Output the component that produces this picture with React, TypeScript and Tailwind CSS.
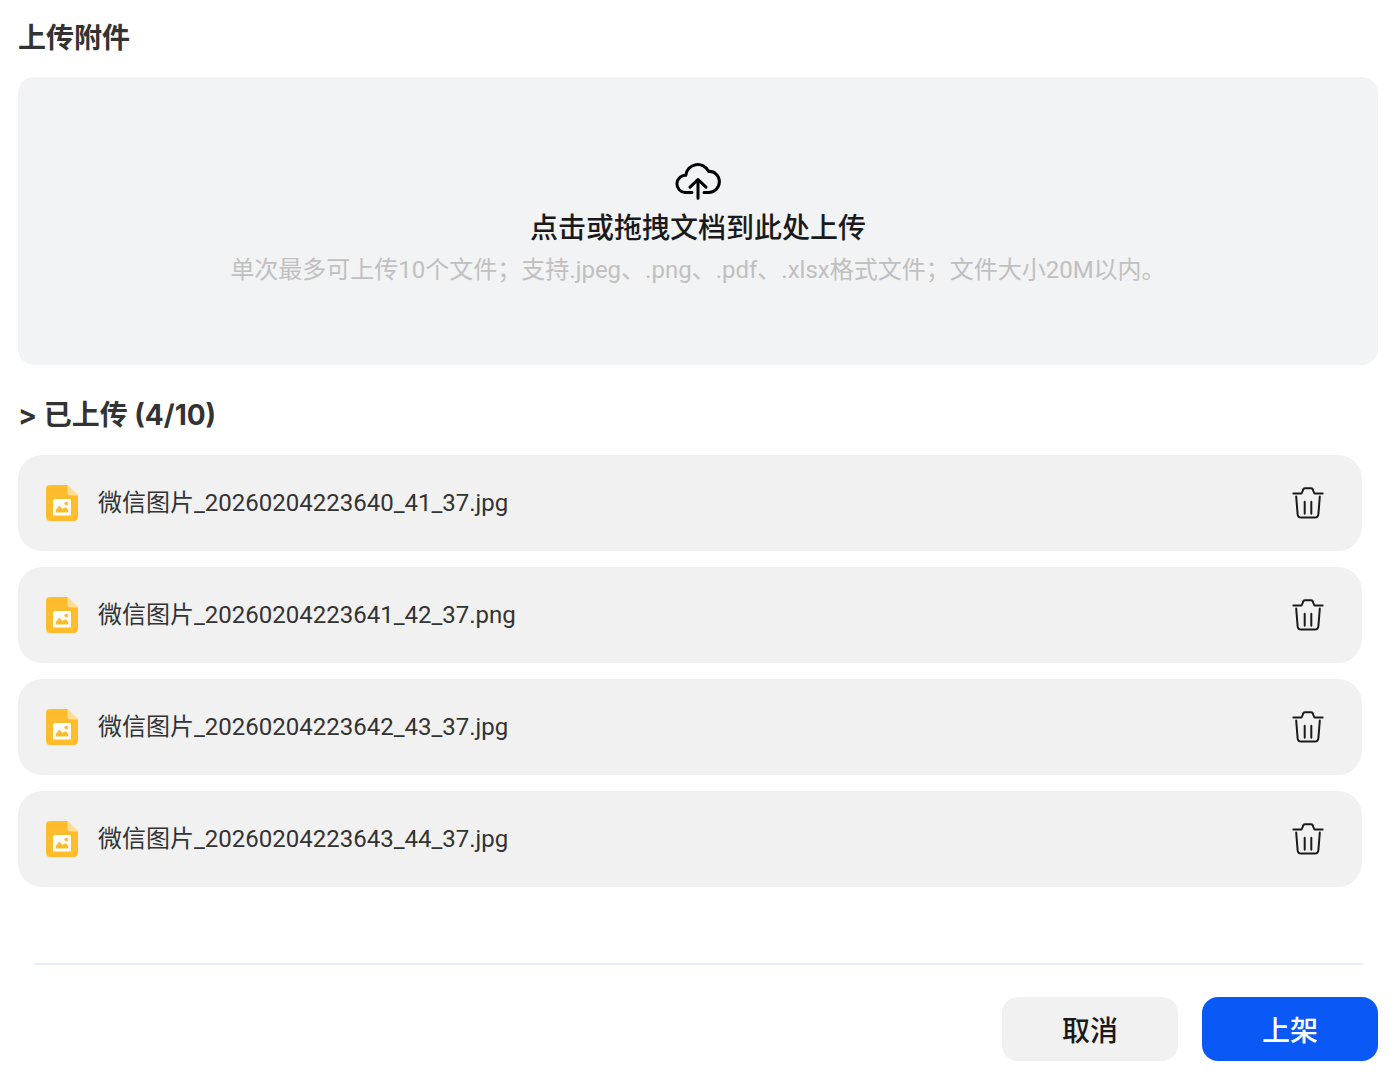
import { useState } from 'react';

const initialFiles = [
  { id: 1, name: '微信图片_20260204223640_41_37.jpg' },
  { id: 2, name: '微信图片_20260204223641_42_37.png' },
  { id: 3, name: '微信图片_20260204223642_43_37.jpg' },
  { id: 4, name: '微信图片_20260204223643_44_37.jpg' },
];

function CloudUploadIcon() {
  return (
    <svg className="w-[46px] h-[38px]" viewBox="0 0 46 38" fill="none" stroke="#000" strokeWidth="3" strokeLinecap="round" strokeLinejoin="round" aria-hidden="true">
      <path d="M17 30.5H10.2a8.6 8.6 0 0 1 .6-17.2A12 12 0 0 1 33.6 9.4C39.6 9 44.4 14 44.4 19.6c0 6-4.8 10.9-10.4 10.9h-5"/>
      <path d="M23 36.3V17.5M15 25.2l8-7.7 8 7.7"/>
    </svg>
  );
}

function ImageFileIcon() {
  return (
    <svg className="w-8 h-9 shrink-0" viewBox="0 0 32 36" aria-hidden="true">
      <path d="M4 0h17.5L32 10.5V32a4 4 0 0 1-4 4H4a4 4 0 0 1-4-4V4a4 4 0 0 1 4-4z" fill="#ffbd2e"/>
      <path d="M21.5 0 32 10.5h-7.5a3 3 0 0 1-3-3z" fill="#ffdd93"/>
      <rect x="7" y="14" width="18" height="16.5" rx="1.5" fill="#fff"/>
      <path d="M9.8 24.7l3.6-4.3 3.4 3.5 2.7-2 2.8 2.8v2.3a.6.6 0 0 1-.6.6H10.4a.6.6 0 0 1-.6-.6z" fill="#ffbd2e"/>
      <circle cx="20.3" cy="18.5" r="1.9" fill="#ffbd2e"/>
    </svg>
  );
}

function TrashIcon() {
  return (
    <svg className="w-8 h-8" viewBox="0 0 32 32" fill="none" stroke="#1a1a1a" strokeWidth="2" strokeLinecap="round" strokeLinejoin="round" aria-hidden="true">
      <path d="M1.4 6.4h8c.8 0 1.2-3 2-4.3.4-.6.9-.8 1.6-.8h6c.7 0 1.2.2 1.6.8.8 1.3 1.2 4.3 2 4.3h8"/>
      <path d="M4.2 9.6 5.6 27c.2 2.6 1.2 3.6 3.6 3.6h13.6c2.4 0 3.4-1 3.6-3.6l1.4-17.4"/>
      <path d="M12.7 14.8v12M19.3 14.8v12"/>
    </svg>
  );
}

export default function App() {
  const [files, setFiles] = useState(initialFiles);

  const remove = (id: number) => setFiles(files.filter(f => f.id !== id));

  return (
    <div className="min-h-screen bg-white pl-[18px] pr-4 pt-4 pb-5 font-['Noto_Sans_CJK_SC',sans-serif] text-[#333333]">
      <h2 className="text-[28px] leading-10 font-bold">上传附件</h2>

      <label className="mt-[21px] h-72 pt-3 rounded-2xl bg-[#f2f3f5] flex flex-col items-center justify-center cursor-pointer">
        <input type="file" multiple className="sr-only"/>
        <CloudUploadIcon/>
        <span className="mt-1 text-[28px] leading-11 font-medium text-[#1a1a1a]">点击或拖拽文档到此处上传</span>
        <span className="text-2xl leading-11 text-[#c0c0c0] font-['Roboto','Noto_Sans_CJK_SC',sans-serif]">
          单次最多可上传10个文件；支持.jpeg、.png、.pdf、.xlsx格式文件；文件大小20M以内。
        </span>
      </label>

      <h3 className="mt-[30px] text-[28px] leading-10 font-bold font-['Inter','Noto_Sans_CJK_SC',sans-serif]">&gt; 已上传 ({files.length}/10)</h3>

      <ul className="mt-5 mr-4 space-y-4 font-['Roboto','Noto_Sans_CJK_SC',sans-serif]">
        {files.map(f => (
          <li key={f.id} className="h-24 pl-7 pr-[38px] rounded-3xl bg-[#f1f1f1] flex items-center">
            <ImageFileIcon/>
            <span className="ml-5 flex-1 text-2xl">{f.name}</span>
            <button type="button" aria-label="删除" onClick={() => remove(f.id)} className="cursor-pointer">
              <TrashIcon/>
            </button>
          </li>
        ))}
      </ul>

      <div className="mt-[76px] ml-4 mr-[14px] h-[2px] rounded-t-full bg-[#e8ebff]"/>

      <div className="mt-8 flex justify-end gap-6 text-[28px] font-medium">
        <button type="button" className="w-44 h-16 rounded-2xl bg-[#f1f1f1] text-[#1a1a1a]">取消</button>
        <button type="button" className="w-44 h-16 rounded-2xl bg-[#0a59f7] text-white">上架</button>
      </div>
    </div>
  );
}
